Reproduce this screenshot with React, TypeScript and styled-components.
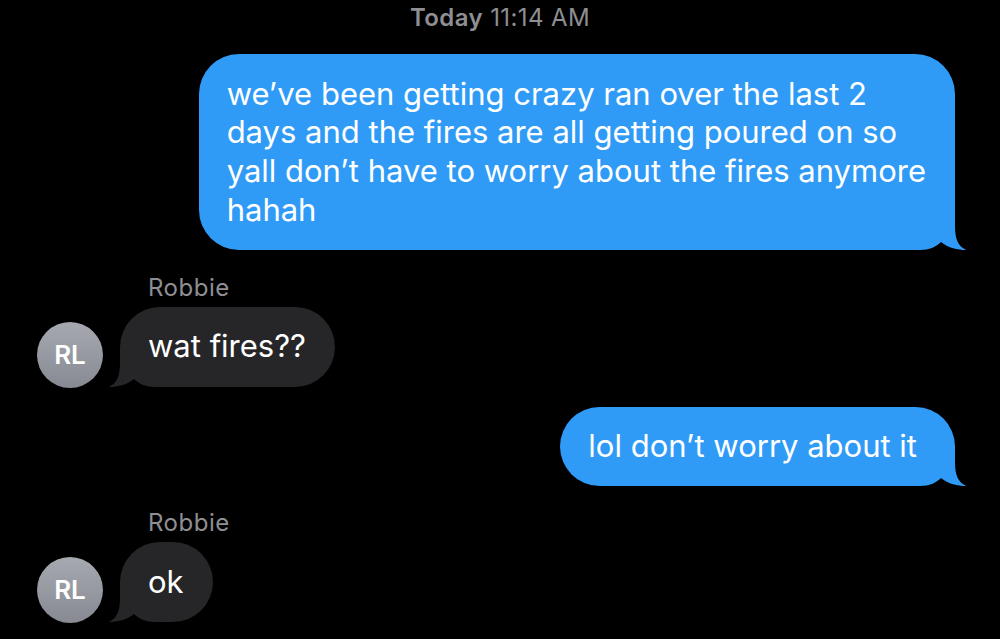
import React from "react";
import styled, { createGlobalStyle } from "styled-components";

const Global = createGlobalStyle`
  html, body { margin: 0; padding: 0; background: #000; }
  body { font-family: Inter, "Noto Sans", "Liberation Sans", sans-serif; -webkit-font-smoothing: antialiased; }
`;

const BLUE = "#2f9bf7";
const GRAY = "#262628";

const Screen = styled.div`
  width: 1000px;
  height: 639px;
  background: #000;
  overflow: hidden;
  display: flex;
  flex-direction: column;
`;

const Stamp = styled.div`
  padding-top: 4px;
  height: 28px;
  line-height: 28px;
  text-align: center;
  color: #8e8e93;
  font-size: 24px;
  letter-spacing: 0.4px;
  b { font-weight: 600; }
`;

const OutRow = styled.div<{ $mt: number }>`
  display: flex;
  justify-content: flex-end;
  padding-right: 45px;
  margin-top: ${(p) => p.$mt}px;
`;

const Bubble = styled.div<{ $out?: boolean; $padR: number }>`
  position: relative;
  background: ${(p) => (p.$out ? BLUE : GRAY)};
  color: #fff;
  padding: 20.5px ${(p) => p.$padR}px 20.5px 28px;
  border-radius: 40px;
`;

const BubbleText = styled.span`
  position: relative;
  z-index: 1;
  display: block;
  font-size: 31px;
  line-height: 38.7px;
  white-space: pre-line;
`;

const Tail = styled.svg<{ $out?: boolean }>`
  position: absolute;
  z-index: 0;
  bottom: 0;
  width: 54px;
  height: 40px;
  ${(p) => (p.$out ? "right: -13px;" : "left: -13px; transform: scaleX(-1);")}
`;

const Sender = styled.div<{ $mt: number }>`
  margin-top: ${(p) => p.$mt}px;
  padding-left: 148px;
  height: 26px;
  line-height: 26px;
  color: #8e8e93;
  font-size: 24px;
  letter-spacing: 0.5px;
`;

const InRow = styled.div`
  display: flex;
  align-items: flex-end;
  gap: 17px;
  padding-left: 37px;
  margin-top: 6px;
`;

const Avatar = styled.div`
  width: 66px;
  height: 66px;
  border-radius: 50%;
  background: linear-gradient(180deg, #a6a9b0 0%, #878a92 100%);
  color: #fff;
  font-weight: 600;
  font-size: 26px;
  display: flex;
  align-items: center;
  justify-content: center;
  margin-bottom: -1px;
`;

const TailShape = ({ out }: { out?: boolean }) => (
  <Tail $out={out} viewBox="0 0 54 40">
    <path
      d="M0 40 L0 0 L41 0 L41 16 C41 29 44 36 52 40 C44 40 34 38 27 32 C22 37 15 40 6 40 Z"
      fill={out ? BLUE : GRAY}
    />
  </Tail>
);

const Out = ({ text, mt, padR }: { text: string; mt: number; padR: number }) => (
  <OutRow $mt={mt}>
    <Bubble $out $padR={padR}>
      <TailShape out />
      <BubbleText>{text}</BubbleText>
    </Bubble>
  </OutRow>
);

const In = ({ text, mt }: { text: string; mt: number }) => (
  <>
    <Sender $mt={mt}>Robbie</Sender>
    <InRow>
      <Avatar>RL</Avatar>
      <Bubble $padR={29}>
        <TailShape />
        <BubbleText>{text}</BubbleText>
      </Bubble>
    </InRow>
  </>
);

export default function App() {
  return (
    <>
      <Global />
      <Screen>
        <Stamp>
          <b>Today</b> 11:14 AM
        </Stamp>
        <Out
          mt={22}
          padR={29}
          text={
            "we\u2019ve been getting crazy ran over the last 2\ndays and the fires are all getting poured on so\nyall don\u2019t have to worry about the fires anymore\nhahah"
          }
        />
        <In mt={25} text="wat fires??" />
        <Out mt={20} padR={38} text={"lol don\u2019t worry about it"} />
        <In mt={24} text="ok" />
      </Screen>
    </>
  );
}
